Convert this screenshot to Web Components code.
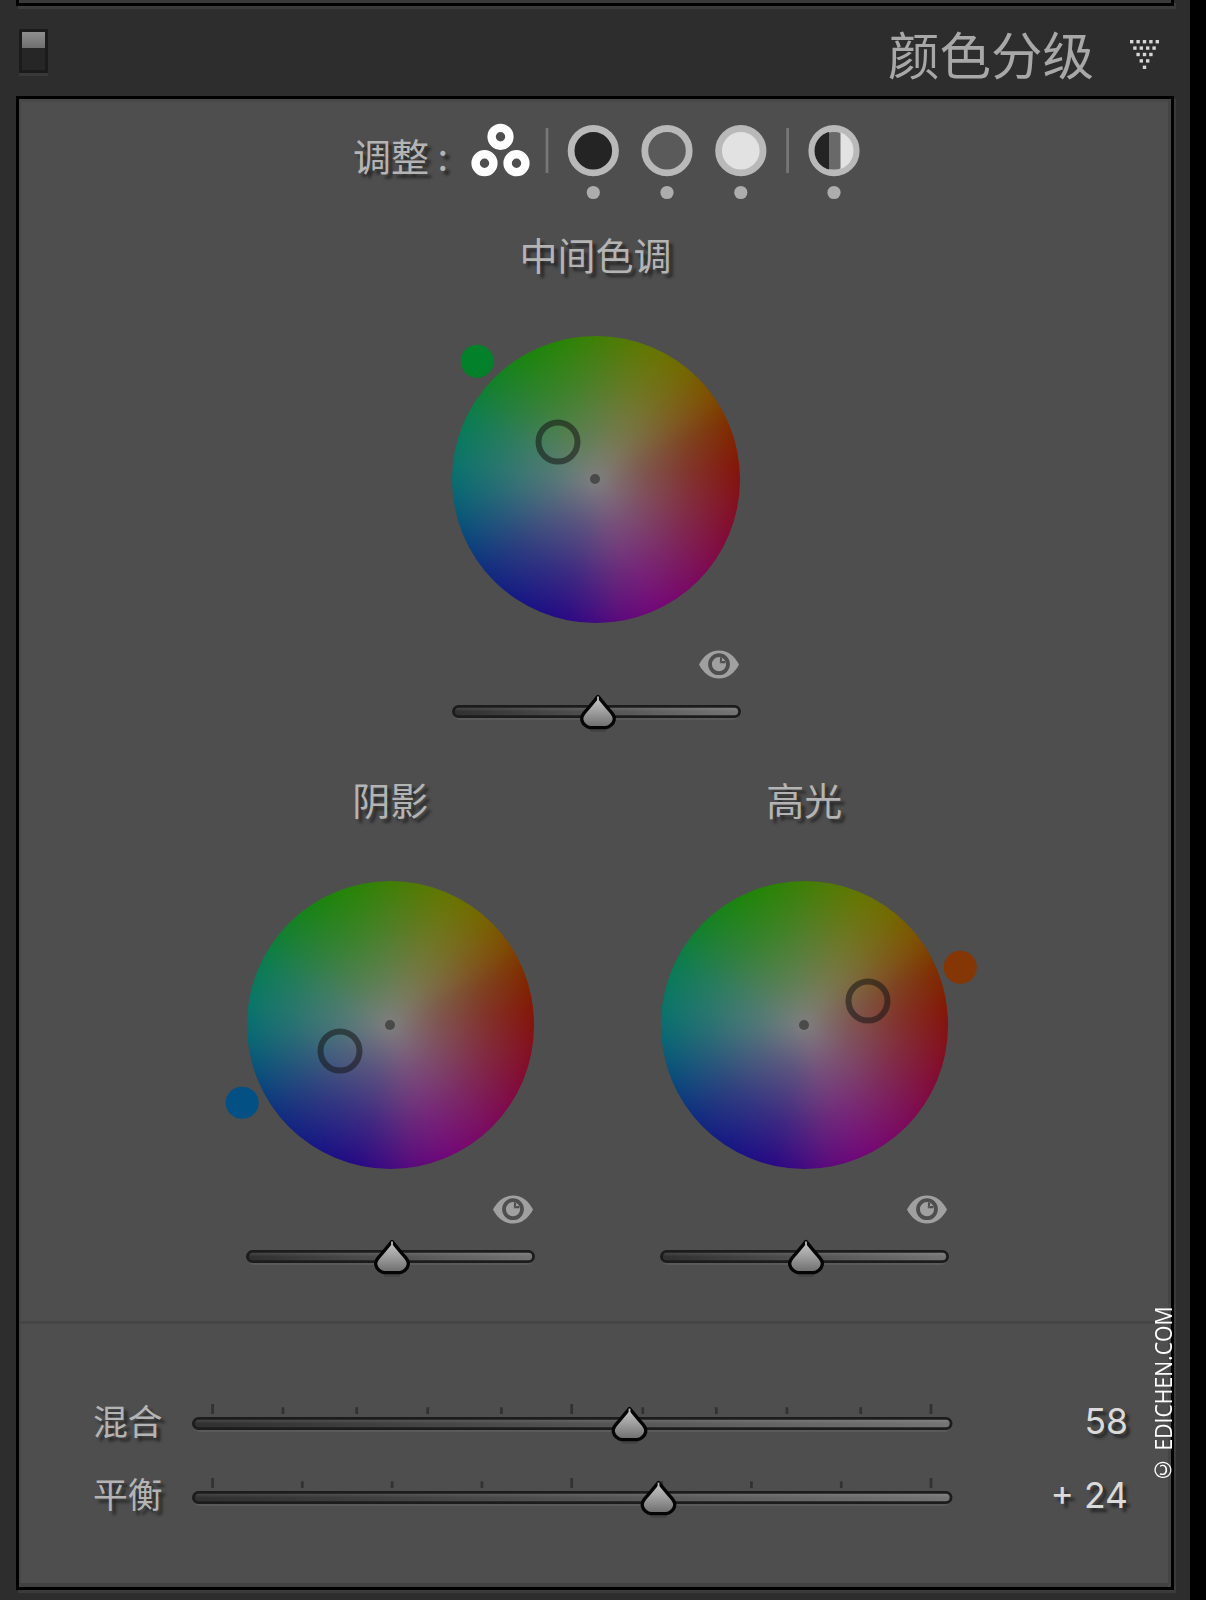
<!DOCTYPE html>
<html lang="zh-CN">
<head>
<meta charset="utf-8">
<title>颜色分级</title>
<style>
html,body{margin:0;padding:0;background:#000}
body{width:1206px;height:1600px;overflow:hidden;font-family:Inter,"Noto Sans CJK SC",sans-serif}
</style>
</head>
<body>
<grading-app></grading-app>
<script>
const define = (name, render) => customElements.define(name, class extends HTMLElement {
  connectedCallback() {
    if (this.shadowRoot) return;
    this.attachShadow({ mode: 'open' }).innerHTML = render(this);
  }
});
const num = (el, k, d = 0) => el.hasAttribute(k) ? parseFloat(el.getAttribute(k)) : d;

define('panel-switch', () => `
<style>:host{display:block;width:29px;height:44px}
.box{box-sizing:border-box;height:44px;border:3px solid #1b1b1b;background:#262626;box-shadow:0 3px 0 #393939}
.knob{height:16px;background:linear-gradient(#8f8f8f,#6f6f6f)}</style>
<div class="box"><div class="knob"></div></div>`);

define('disclosure-dots', () => {
  let dots = '';
  for (let r = 0; r < 5; r++) for (let c = 0; c < 5 - r; c++)
    dots += `<rect x="${(c * 6.4 + r * 3.2).toFixed(1)}" y="${(r * 6.4).toFixed(1)}" width="3.4" height="3.4"/>`;
  return `<style>:host{display:block;width:30px;height:30px}svg{display:block}</style>
<svg width="30" height="30" fill="#d6d6d6">${dots}</svg>`;
});

define('drop-slider', el => {
  const w = num(el, 'width'), t = num(el, 'thumb');
  const ticks = (el.getAttribute('ticks') || '').split(' ').filter(Boolean).map(Number);
  const mid = (ticks.length - 1) / 2;
  const marks = ticks.map((x, i) => {
    const long = i === 0 || i === ticks.length - 1 || i === mid;
    return `<rect x="${x - 1.4}" y="${long ? -2 : 1.3}" width="2.8" height="${long ? 10 : 6.7}" fill="#323232"/>`;
  }).join('');
  return `<style>:host{display:block;width:${w}px;height:36px}svg{display:block;overflow:visible}</style>
<svg width="${w}" height="36">
<defs>
<linearGradient id="t"><stop offset="0" stop-color="#303030"/><stop offset=".1" stop-color="#363636"/><stop offset="1" stop-color="#747474"/></linearGradient>
<linearGradient id="h" x2="0" y2="1"><stop offset="0" stop-color="#fff" stop-opacity=".1"/><stop offset="1" stop-color="#fff" stop-opacity="0"/></linearGradient>
<linearGradient id="d" x2="0" y2="1"><stop offset="0" stop-color="#c8c8c8"/><stop offset=".45" stop-color="#a2a2a2"/><stop offset="1" stop-color="#6c6c6c"/></linearGradient>
</defs>
${marks}
<rect x="2" y="14" width="${w - 4}" height="12" rx="6" fill="#5a5a5a"/>
<rect x="1.4" y="12.4" width="${w - 2.8}" height="10.2" rx="5.1" fill="url(#t)" stroke="#1c1c1c" stroke-width="2.8"/>
<rect x="4" y="13.8" width="${w - 8}" height="4" rx="2" fill="url(#h)"/>
<g transform="translate(${t} 0)">
<path d="M-10 34.5H10L7 38H-7Z" fill="#000" opacity=".12"/>
<path d="M0 2.4C2 4.8 7.5 11.5 11.5 16.2C15.2 20.3 17 22.5 16.2 25.8C15.3 30.2 11.2 33.6 7.5 33.6H-7.5C-11.2 33.6-15.3 30.2-16.2 25.8C-17 22.5-15.2 20.3-11.5 16.2C-7.5 11.5-2 4.8 0 2.4Z" fill="url(#d)" stroke="#050505" stroke-width="3.3" stroke-linejoin="round"/>
<path d="M0 2.6V8" stroke="#bcbcbc" stroke-width="1.8"/>
</g></svg>`;
});

define('eye-icon', () => `
<style>:host{display:block;width:40px;height:29px}svg{display:block}</style>
<svg width="40" height="29" viewBox="0 0 40 29">
<path d="M0 14.5C4 6.5 11 .4 20 .4S36 6.5 40 14.5C36 22.5 29 28.6 20 28.6S4 22.5 0 14.5Z" fill="#a0a0a0"/>
<circle cx="20" cy="14.2" r="9" fill="none" stroke="#4e4e4e" stroke-width="3.8"/>
<path d="M20.8 13.2L21 7.2L23.2 7.8L22.8 11Z" fill="#4e4e4e"/>
<path d="M20.8 13.2L26.6 13.2L26.2 11L22.8 11Z" fill="#4e4e4e"/>
</svg>`);

define('color-wheel', el => `
<style>
:host{display:flex;flex-direction:column;align-items:center;width:288px}
.title{font-size:38px;line-height:38px;height:38px;margin:-2px 1px 63px 0;color:#b4b4b4;font-weight:400;font-family:"Noto Sans CJK SC",sans-serif;text-shadow:4px 4px 3px rgba(0,0,0,.5);white-space:nowrap}
.wheel{position:relative;width:287.4px;height:287.4px;margin-bottom:26.6px}
.disc{display:grid;width:100%;height:100%;border-radius:50%;overflow:hidden}
.disc>*{grid-area:1/1}
.hues{margin:-24px;filter:blur(7px);background:conic-gradient(#3f7f06 0deg,#667600 23deg,#746a00 37.5deg,#7f5000 53deg,#7f2c00 68deg,#841508 85deg,#84101c 98deg,#820b38 115deg,#7c0a5c 135deg,#740878 155deg,#5a0a7c 172deg,#430a80 180deg,#260a84 194deg,#171684 211deg,#122a80 229deg,#0a4a7c 247deg,#086872 265deg,#0a746a 277deg,#0a7c52 295deg,#12802e 311deg,#1a8410 329deg,#288406 345deg,#3f7f06 360deg)}
.sat{position:relative;background:radial-gradient(circle closest-side,rgb(126,126,126) 0%,rgba(124,124,124,.62) 33%,rgba(124,124,124,.28) 67%,rgba(124,124,124,0) 100%)}
.wheel i{position:absolute;box-sizing:border-box;border-radius:50%;transform:translate(-50%,-50%)}
.center{width:10px;height:10px;background:#4a4a4a;left:143px;top:143.2px}
.ring{width:45px;height:45px;border:6px solid rgba(20,20,20,.55)}
.hue{width:32.6px;height:32.6px}
eye-icon{align-self:flex-end;margin:0 1.5px 15px 0}
</style>
<div class="title"><slot></slot></div>
<div class="wheel"><div class="disc"><div class="hues"></div><div class="sat"></div></div><i class="center"></i>
<i class="ring" style="left:${num(el, 'rx')}px;top:${num(el, 'ry')}px"></i>
<i class="hue" style="left:${num(el, 'hx')}px;top:${num(el, 'hy')}px;background:${el.getAttribute('hue')}"></i></div>
<eye-icon></eye-icon>
<drop-slider width="289" thumb="146"></drop-slider>`);

define('mode-bar', () => {
  const ring = (x, fill) => `<circle cx="${x}" cy="30.7" r="22.2" fill="${fill}" stroke="#b9b9b9" stroke-width="6.8"/><circle cx="${x}" cy="72.5" r="6.6" fill="#adadad"/>`;
  const tri = (x, y) => `<circle cx="${x}" cy="${y}" r="8.9" fill="none" stroke="#fff" stroke-width="8.4"/>`;
  return `<style>:host{display:flex;align-items:flex-start}
.label{font-size:38px;line-height:38px;margin-top:16px;width:117px;color:#b4b4b4;font-weight:400;font-family:"Noto Sans CJK SC",sans-serif;text-shadow:4px 4px 3px rgba(0,0,0,.5);white-space:pre}
svg{display:block}</style>
<div class="label">调整 :</div>
<svg width="400" height="82">
${tri(30.5, 16.8)}${tri(14.5, 43.2)}${tri(46.5, 43.2)}
<rect x="75.6" y="8" width="2.8" height="45" fill="#777"/><rect x="316.2" y="8" width="2.8" height="45" fill="#777"/>
${ring(123.3, '#242424')}${ring(197, '#5a5a5a')}${ring(270.8, '#e2e2e2')}
<clipPath id="c"><circle cx="364" cy="30.7" r="19.5"/></clipPath>
${ring(364, '#696969')}
<g clip-path="url(#c)"><rect x="340" y="8" width="19" height="46" fill="#242424"/><rect x="370.5" y="8" width="20" height="46" fill="#e2e2e2"/></g>
</svg>`;
});

define('value-row', el => `
<style>:host{display:flex;align-items:flex-start;height:36px}
.label{width:99px;font-size:34.8px;line-height:36px;margin-top:-4.5px;color:#b4b4b4;font-weight:400;font-family:"Noto Sans CJK SC",sans-serif;text-shadow:4px 4px 3px rgba(0,0,0,.5)}
.value{width:175.5px;text-align:right;font:400 35.5px/36px Inter,sans-serif;margin-top:-2px;color:#dadada;text-shadow:4px 4px 3px rgba(0,0,0,.5);white-space:pre}</style>
<div class="label">${el.getAttribute('label')}</div>
<drop-slider width="760.5" thumb="${num(el, 'thumb')}" ticks="${el.getAttribute('ticks')}"></drop-slider>
<div class="value"><slot></slot></div>`);

define('water-mark', () => `
<style>:host{display:block;width:24px;height:188px;writing-mode:vertical-rl;transform:rotate(180deg) scaleY(.92);font:400 23px/24px "Open Sans",sans-serif;color:#fff;white-space:nowrap}</style><slot></slot>`);

define('grading-app', () => `
<style>
:host{display:block;position:relative;box-sizing:border-box;width:1190px;height:1600px;background:#2d2d2d;padding-left:16px;overflow:hidden}
.prev{box-sizing:border-box;width:1158px;height:6px;background:#393939;border:solid #000;border-width:0 3px 3px;box-shadow:2px 3px 0 #3b3b3b}
header{display:flex;width:1158px;height:90px;box-sizing:border-box}
panel-switch{margin:23px 0 0 3px}
h1{margin:21px 0 0 auto;font:400 51.5px/52px "Noto Sans CJK SC",sans-serif;color:#a8a8a8}
disclosure-dots{margin:34px 14px 0 36px}
.panel{box-sizing:border-box;width:1158px;height:1494px;border:3px solid #000;background:#4e4e4e;box-shadow:2px 3px 0 #3b3b3b,inset -3px 0 0 #454545,inset 0 -4px 0 #424242,inset 2px 3px 1px #484848}
mode-bar{margin:21px 0 0 334px}
.mid{margin:35px 0 0 433px}
.low{display:flex;gap:126px;margin:52.5px 0 0 227.8px}
.divider{height:3px;background:#454545;margin:46px 0 82px}
value-row{margin:0 0 37.5px 74px}
water-mark{position:absolute;left:1151px;top:1305px}
</style>
<div class="prev"></div>
<header><panel-switch></panel-switch><h1>颜色分级</h1><disclosure-dots></disclosure-dots></header>
<div class="panel">
<mode-bar></mode-bar>
<color-wheel class="mid" rx="106" ry="106" hx="25" hy="25" hue="#02802a">中间色调</color-wheel>
<div class="low">
<color-wheel rx="92.7" ry="169.4" hx="-4.8" hy="221.2" hue="#035084">阴影</color-wheel>
<color-wheel rx="207.1" ry="119.3" hx="299.3" hy="85.7" hue="#843605">高光</color-wheel>
</div>
<div class="divider"></div>
<value-row label="混合" thumb="437.5" ticks="20.6 91 164.7 235.7 309.4 379.7 450.8 524.3 594.9 668.7 739">58</value-row>
<value-row label="平衡" thumb="466.5" ticks="20.6 110.3 200.1 289.9 379.7 469.7 559.4 649.3 739">+ 24</value-row>
</div>
<water-mark>© EDICHEN.COM</water-mark>`);
</script>
</body>
</html>
